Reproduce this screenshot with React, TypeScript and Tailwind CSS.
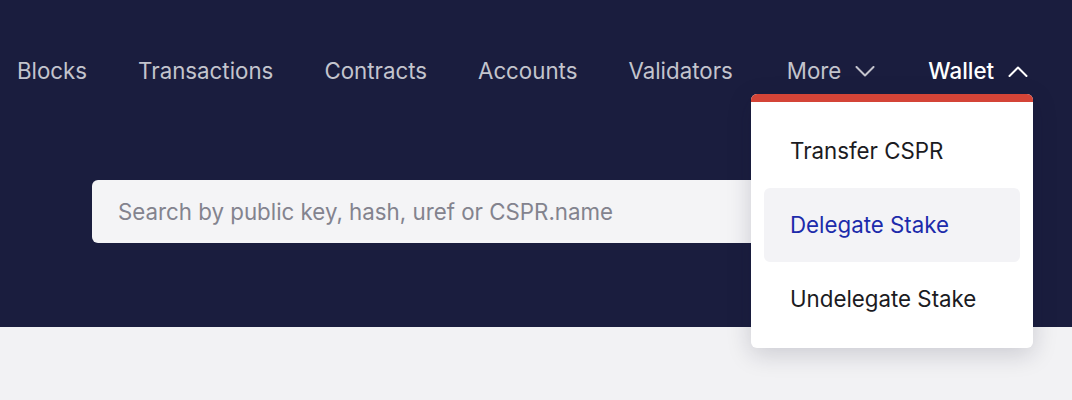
const navItems = ["Blocks", "Transactions", "Contracts", "Accounts", "Validators"];

function Chevron({ up = false }: { up?: boolean }) {
  return (
    <svg width="20" height="11" viewBox="0 0 20 11" fill="none" className="shrink-0">
      <polyline
        points={up ? "1.5,10 10,1.5 18.5,10" : "1.5,1 10,9.5 18.5,1"}
        stroke="currentColor"
        strokeWidth="2"
        strokeLinecap="round"
        strokeLinejoin="round"
      />
    </svg>
  );
}

const walletItems = [
  { label: "Transfer CSPR", active: false },
  { label: "Delegate Stake", active: true },
  { label: "Undelegate Stake", active: false }
];

export default function App() {
  return (
    <div className="relative h-[400px] w-[1072px] overflow-hidden bg-[#f2f2f4] font-['Inter',sans-serif]">
      <header className="h-[327px] bg-[#1a1d3e]">
        <nav className="flex h-[142px] items-start gap-[51px] pl-[17px] pt-[56px] text-[22.3px] leading-[30px] text-[#c3c4cd]">
          {navItems.map((item) => (
            <span key={item} className="whitespace-nowrap">
              {item}
            </span>
          ))}
          <span className="ml-[3px] flex items-center gap-[14px] whitespace-nowrap">
            More
            <Chevron />
          </span>
          <span className="ml-[2px] flex items-center gap-[14px] whitespace-nowrap font-medium text-white">
            Wallet
            <Chevron up />
          </span>
        </nav>
        <div className="pl-[92px] pt-[38px]">
          <div className="flex h-[63px] w-[900px] items-center rounded-[6px] bg-[#f4f4f6] pl-[26px] text-[22.3px] text-[#83838e]">
            Search by public key, hash, uref or CSPR.name
          </div>
        </div>
      </header>

      <div className="absolute left-[751px] top-[94px] w-[282px] overflow-hidden rounded-[6px] bg-white shadow-[0_6px_24px_rgba(20,22,50,0.18)]">
        <div className="h-[8px] bg-[#d44437]" />
        <ul className="flex flex-col px-[13px] py-[12px]">
          {walletItems.map((it) => (
            <li
              key={it.label}
              className={`flex h-[74px] items-center rounded-[6px] pl-[26px] text-[22.3px] ${
                it.active ? "bg-[#f3f3f6] text-[#1c2bab]" : "text-[#1b1b22]"
              }`}
            >
              {it.label}
            </li>
          ))}
        </ul>
      </div>
    </div>
  );
}
